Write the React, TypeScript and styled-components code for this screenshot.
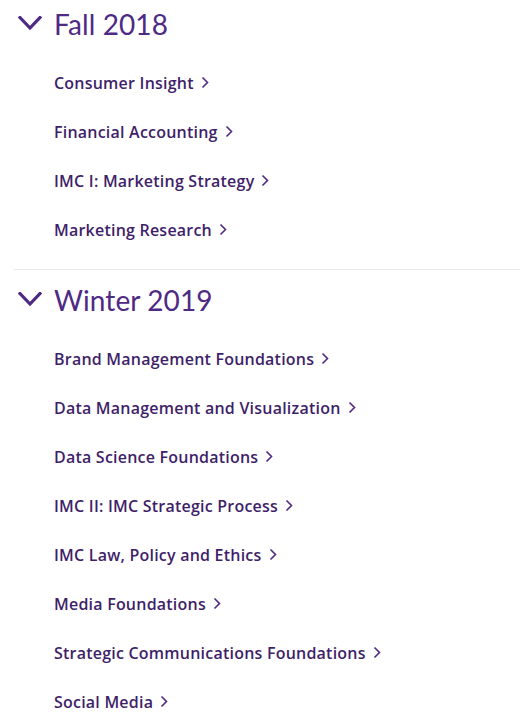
import React from "react";
import styled, { createGlobalStyle } from "styled-components";

const Global = createGlobalStyle`
  html, body { margin: 0; padding: 0; background: #fff; }
  body { font-family: Lato, "Open Sans", sans-serif; }
`;

const Page = styled.div`
  width: 521px;
  padding: 0 1px 0 14px;
  box-sizing: border-box;
`;

const Section = styled.section<{ $first?: boolean }>`
  border-top: ${(p) => (p.$first ? "none" : "1px solid #e9e9ec")};
  padding-top: ${(p) => (p.$first ? "8px" : "14px")};
  padding-bottom: 15px;
`;

const Heading = styled.h2`
  margin: 0;
  display: flex;
  align-items: center;
  height: 32px;
  font-family: Lato, sans-serif;
  font-weight: 400;
  font-size: 28px;
  color: #4e2a84;
  letter-spacing: 0.1px;
`;

const Chevron = styled.svg`
  width: 24px;
  height: 16px;
  margin-left: 4px;
  margin-right: 12px;
  flex: none;
`;

const List = styled.ul`
  list-style: none;
  margin: 18px 0 0;
  padding: 0 0 0 40px;
`;

const Item = styled.li`
  height: 49px;
  display: flex;
  align-items: center;
`;

const Link = styled.a`
  display: inline-flex;
  align-items: center;
  font-family: "Open Sans", sans-serif;
  font-weight: 600;
  font-size: 16px;
  letter-spacing: 0.22px;
  color: #3f1f69;
  text-decoration: none;
`;

const Arrow = styled.svg`
  width: 8px;
  height: 13px;
  margin-left: 7px;
`;

const sections = [
  {
    title: "Fall 2018",
    items: ["Consumer Insight", "Financial Accounting", "IMC I: Marketing Strategy", "Marketing Research"],
  },
  {
    title: "Winter 2019",
    items: [
      "Brand Management Foundations",
      "Data Management and Visualization",
      "Data Science Foundations",
      "IMC II: IMC Strategic Process",
      "IMC Law, Policy and Ethics",
      "Media Foundations",
      "Strategic Communications Foundations",
      "Social Media",
    ],
  },
];

export default function App() {
  return (
    <Page>
      <Global />
      {sections.map((s, i) => (
        <Section key={s.title} $first={i === 0}>
          <Heading>
            <Chevron viewBox="0 0 24 16">
              <path d="M2 1.5 L12 12 L22 1.5" fill="none" stroke="#4e2a84" strokeWidth="3.2" strokeLinecap="square" />
            </Chevron>
            {s.title}
          </Heading>
          <List>
            {s.items.map((t) => (
              <Item key={t}>
                <Link href="#">
                  {t}
                  <Arrow viewBox="0 0 8 13">
                    <path d="M1.5 1.5 L6.5 6.5 L1.5 11.5" fill="none" stroke="#4e2a84" strokeWidth="1.6" />
                  </Arrow>
                </Link>
              </Item>
            ))}
          </List>
        </Section>
      ))}
    </Page>
  );
}
